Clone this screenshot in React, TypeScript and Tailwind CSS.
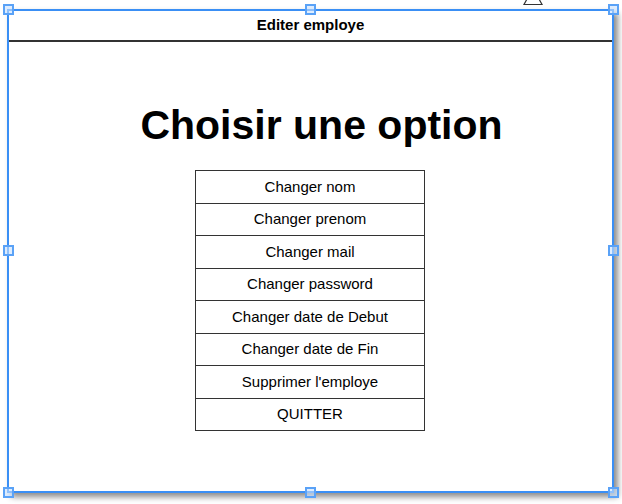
const options = [
  "Changer nom",
  "Changer prenom",
  "Changer mail",
  "Changer password",
  "Changer date de Debut",
  "Changer date de Fin",
  "Supprimer l'employe",
  "QUITTER",
];

// selection handles around the selected frame
const handles = [
  "left-[3px] top-[4px]",
  "left-[305px] top-[4px]",
  "left-[608px] top-[4px]",
  "left-[3px] top-[245px]",
  "left-[608px] top-[245px]",
  "left-[3px] top-[487px]",
  "left-[305px] top-[487px]",
  "left-[608px] top-[487px]",
];

export default function App() {
  return (
    <div
      className="relative w-[622px] h-[504px] bg-white overflow-hidden text-black"
      style={{ fontFamily: '"Liberation Sans", Arial, sans-serif' }}
    >
      {/* partially visible shape at the top */}
      <svg className="absolute left-[521px] top-0" width="24" height="6" viewBox="0 0 24 6">
        <polyline points="6,-1 3,4.5 21,4.5 18,-1" fill="white" stroke="#333" strokeWidth="1.2" />
      </svg>

      <div className="ml-[7px] mt-[9px] w-[607px] h-[484px] border-2 border-[#3a8ff5] bg-white shadow-[4px_4px_6px_rgba(0,0,0,0.45)] flex flex-col">
        <div className="h-[31px] shrink-0 border-b-2 border-[#333] flex items-center justify-center font-bold text-[15px]">
          Editer employe
        </div>

        <h1 className="mt-[63px] pl-[22px] text-center font-bold text-[41px] leading-none">
          Choisir une option
        </h1>

        <div className="mt-[24px] ml-[186px] w-[230px] border-t border-[#333]">
          {options.map((o) => (
            <div
              key={o}
              className="h-[32.5px] border-x border-b border-[#333] flex items-center justify-center text-[15px]"
            >
              {o}
            </div>
          ))}
        </div>
      </div>

      {handles.map((h) => (
        <div
          key={h}
          className={`absolute ${h} w-[11px] h-[11px] border-2 border-[#5aa2f7] bg-[rgba(200,225,255,0.6)]`}
        />
      ))}
    </div>
  );
}
